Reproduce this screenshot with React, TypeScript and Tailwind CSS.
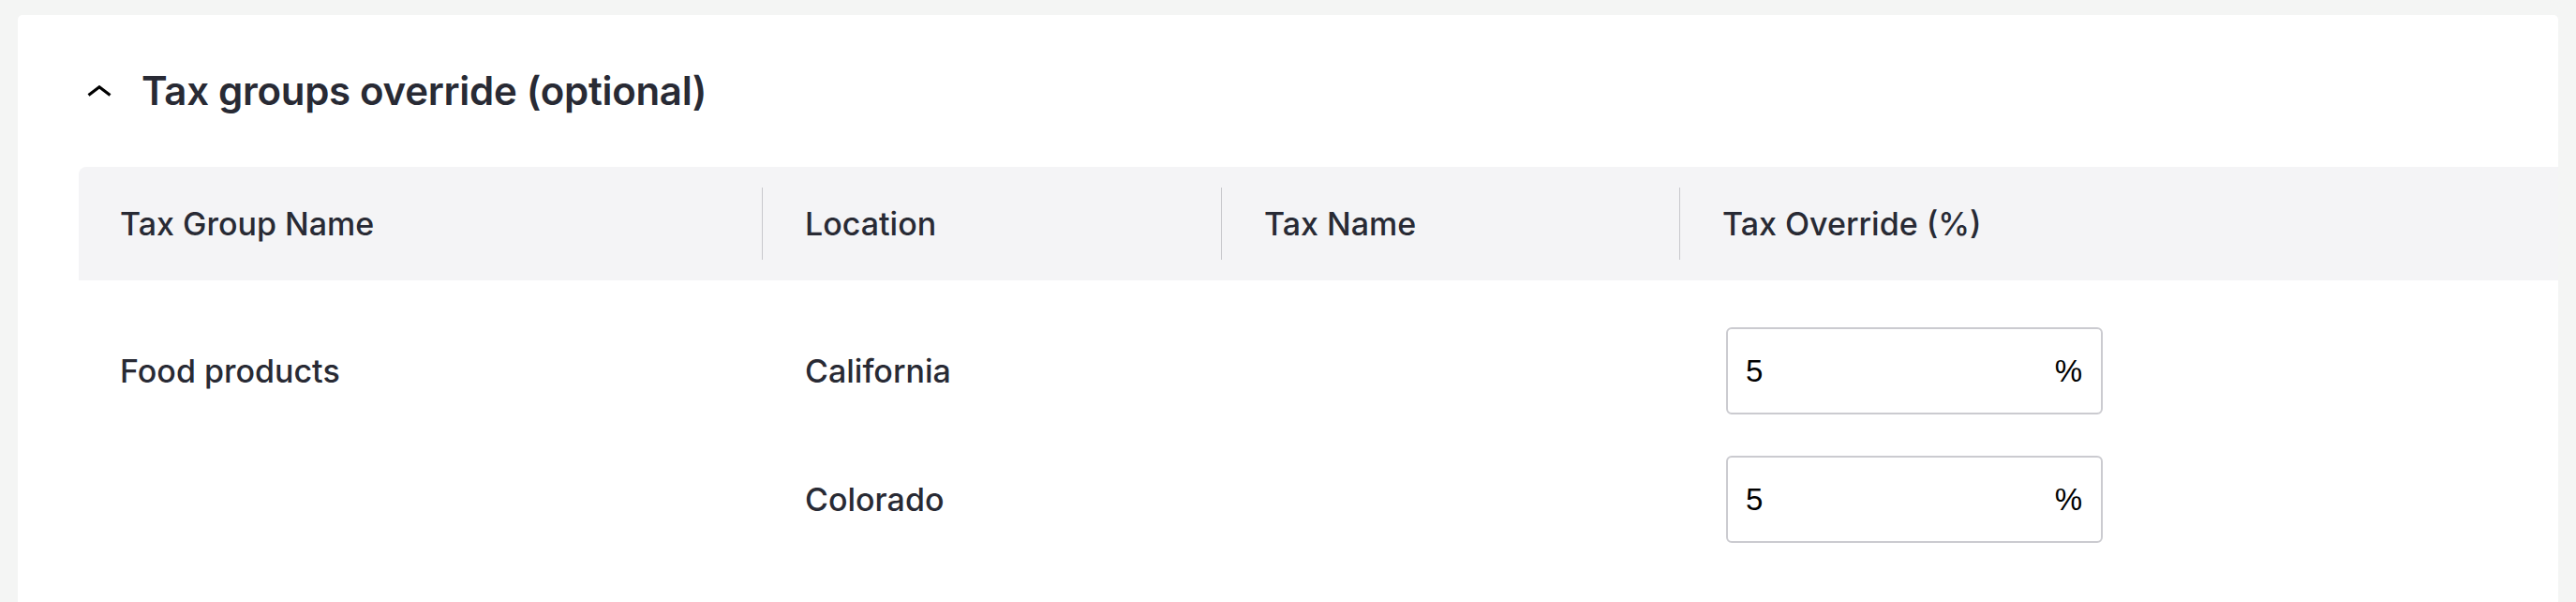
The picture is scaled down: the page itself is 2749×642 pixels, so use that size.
import React from "react";

const rows = [
  { group: "Food products", location: "California", taxName: "", rate: "5" },
  { group: "", location: "Colorado", taxName: "", rate: "5" },
];

const columns = ["Location", "Tax Name", "Tax Override (%)"];

function ChevronUp() {
  return (
    <svg width="26" height="12" viewBox="0 0 26 12" fill="none" className="shrink-0">
      <polyline
        points="1.5,10.5 13,1.8 24.5,10.5"
        stroke="#000"
        strokeWidth="3.2"
        strokeLinejoin="miter"
      />
    </svg>
  );
}

function PercentInput({ value }: { value: string }) {
  return (
    <div className="flex items-center w-[402px] h-[93px] border-2 border-[#cbcbd0] rounded-[6px] pl-[19px] pr-[20px] font-['Liberation_Sans',Arial,sans-serif] text-[33px] text-black">
      <input
        defaultValue={value}
        className="flex-1 min-w-0 bg-transparent outline-none"
      />
      <span>%</span>
    </div>
  );
}

export default function App() {
  return (
    <div className="min-h-[642px] bg-[#f4f5f4] pt-[16px] px-[19px] font-['Inter',sans-serif] text-[#282a34]">
      <div className="bg-white rounded-t-[5px] min-h-[626px] pl-[65px] pt-[56px] pb-[40px] overflow-hidden">
        {/* Section title */}
        <div className="flex items-center h-[50px] pl-[9px] gap-[32px]">
          <ChevronUp />
          <h2 className="text-[42px] leading-[50px] font-semibold tracking-[-0.3px]">
            Tax groups override (optional)
          </h2>
        </div>

        {/* Table */}
        <div className="mt-[56px]">
          <div className="grid grid-cols-[729px_490px_489px_1fr] items-center h-[121px] bg-[#f4f4f6] rounded-tl-[8px] text-[34px] font-medium">
            <div className="pl-[44px]">Tax Group Name</div>
            {columns.map((c) => (
              <div
                key={c}
                className="flex items-center h-[77px] border-l-[1.5px] border-[#c8c8cc] pl-[45px]"
              >
                {c}
              </div>
            ))}
          </div>

          <div className="grid grid-cols-[729px_490px_489px_1fr] auto-rows-[93px] gap-y-[44px] items-center pt-[50px] text-[34px] font-medium">
            {rows.map((r, i) => (
              <React.Fragment key={i}>
                <div className="pl-[44px]">{r.group}</div>
                <div className="pl-[46px]">{r.location}</div>
                <div className="pl-[46px]">{r.taxName}</div>
                <div className="pl-[50px]">
                  <PercentInput value={r.rate} />
                </div>
              </React.Fragment>
            ))}
          </div>
        </div>
      </div>
    </div>
  );
}
